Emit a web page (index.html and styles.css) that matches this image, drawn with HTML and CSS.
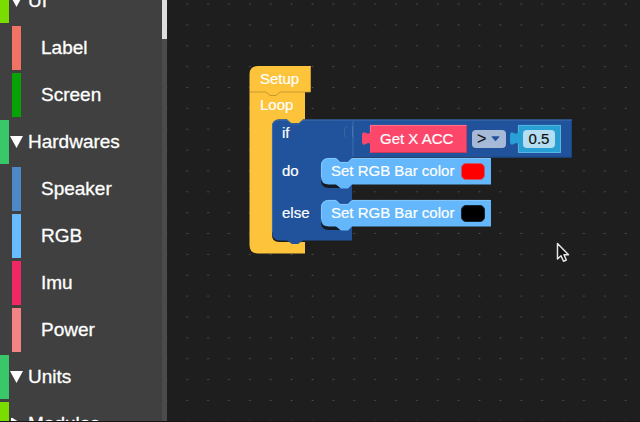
FILE: index.html
```html
<!DOCTYPE html>
<html lang="en">
<head>
<meta charset="utf-8">
<title>Block editor</title>
<link rel="stylesheet" href="styles.css">
</head>
<body>
<div class="editor">
  <nav class="toolbox" aria-label="Blocks">
    <ul class="categories">
      <li class="category lime"><a href="#ui"><svg class="arrow" viewBox="0 0 13 12"><path d="M0 0H13L6.500 12Z"/></svg>UI</a></li>
      <li class="category item label"><a href="#label">Label</a></li>
      <li class="category item screen"><a href="#screen">Screen</a></li>
      <li class="category green"><a href="#hardwares"><svg class="arrow" viewBox="0 0 13 12"><path d="M0 0H13L6.500 12Z"/></svg>Hardwares</a></li>
      <li class="category item speaker"><a href="#speaker">Speaker</a></li>
      <li class="category item rgb"><a href="#rgb">RGB</a></li>
      <li class="category item imu"><a href="#imu">Imu</a></li>
      <li class="category item power"><a href="#power">Power</a></li>
      <li class="category green"><a href="#units"><svg class="arrow" viewBox="0 0 13 12"><path d="M0 0H13L6.500 12Z"/></svg>Units</a></li>
      <li class="category lime"><a href="#modules"><svg class="arrow" viewBox="0 0 13 12"><path d="M1 -1L12 6L1 13Z"/></svg>Modules</a></li>
    </ul>
    <div class="scrollbar"><div class="thumb"></div></div>
  </nav>
  <main class="workspace">
    <svg class="grid" aria-hidden="true">
      <defs>
        <pattern id="dots" x="9.700" y="14.500" width="20.880" height="20.860" patternUnits="userSpaceOnUse">
          <path d="M9.700 10.400h1.600" stroke="#555" stroke-width="1"/>
        </pattern>
      </defs>
      <rect width="100%" height="100%" fill="url(#dots)"/>
    </svg>
    <div class="program">
      <svg class="shapes" viewBox="249 66 324 188" aria-hidden="true">
        <!-- Loop -->
        <path fill="#fdc43b" d="M249.500 92H305V119.500H303L299 123H291L287 119.500H279Q272 119.500 272 127V235Q272 242 279 242H305V253.500H258Q249.500 253.500 249.500 245Z"/>
        <!-- Setup -->
        <path fill="#fdc43b" d="M249.500 92V74Q249.500 66 258 66H311V92H280L276 95.500H270L266 92Z"/>
        <path fill="none" stroke="#b88d2b" stroke-width=".8" d="M250 92H266L270 95.500H276L280 92H310.500V67"/>
        <!-- If / else -->
        <path fill="#20539b" d="M272 127Q272 119.500 279 119.500H287L291 123.500H299L303 119.500H572V157.500H352V240.500H303L298 244H292L287 240.500H280Q272 240.500 272 232Z"/>
        <path fill="none" stroke="#4876b3" stroke-width=".8" d="M272.400 232V127Q272.400 120 279 120H287L291 123.800H299L303 120H571.500M353 156.500V121M352.500 137V126"/>
        <path fill="none" stroke="#41699e" stroke-width=".8" d="M347 126Q344.500 127 344.500 130V135Q345 138 347 138"/>
        <path fill="none" stroke="#194681" d="M571.500 121V157H491"/>
        <!-- Shadows below the statements -->
        <path id="slot" fill="#151b23" d="M321 174V180Q321 188 329 188H345V174Z"/>
        <use href="#slot" y="42"/>
        <!-- Set RGB Bar color -->
        <g id="statement">
          <path fill="#64b7fb" d="M321 166Q321 158 329 158H336L340 162H348L352 158H491V184.500H352L348 188.500H341L336 184.500H329Q321 184.500 321 177Z"/>
          <path fill="none" stroke="#8bcafd" stroke-width=".8" d="M321.400 177V166Q321.400 158.400 329 158.400H336L340 162.400H348L352 158.400H490"/>
        </g>
        <use href="#statement" y="42"/>
        <!-- Get X ACC -->
        <path fill="#fc476b" d="M370 125H467V153H370V144Q369 142 366 144Q362 146 362 142V135Q362 131 366 133Q369 135 370 132Z"/>
        <path fill="none" stroke="#ff8199" stroke-width=".8" d="M370.400 132V125.400H466"/>
        <path fill="none" stroke="#bd3754" stroke-width=".8" d="M466.500 126V152.500H371"/>
        <!-- Number -->
        <path fill="#289fd5" d="M518 125H561V153H518V144Q517 142 514 144Q510 146 510 142V135Q510 131 514 133Q517 135 518 132Z"/>
        <path fill="none" stroke="#63bde3" stroke-width=".8" d="M518.400 132V125.400H560.500V152.500H518.400V144"/>
      </svg>
      <div class="row">Setup</div>
      <div class="row">Loop</div>
      <div class="row nested condition">
        <span class="keyword">if</span>
        <span class="getter">Get X ACC</span>
        <span class="operator">
          <select aria-label="Comparison"><option>&gt;</option><option>&lt;</option><option>=</option></select>
          <svg class="caret" viewBox="0 0 10 6" aria-hidden="true"><path d="M1 0H9Q10 0 9 1L5.500 5Q5 6 4.500 5L1 1Q0 0 1 0Z"/></svg>
        </span>
        <input class="number" type="text" value="0.5" aria-label="Number">
      </div>
      <div class="row nested statement">
        <span class="keyword">do</span>
        <span class="action">Set RGB Bar color</span>
        <button class="swatch red" type="button" aria-label="Red"></button>
      </div>
      <div class="row nested statement">
        <span class="keyword">else</span>
        <span class="action">Set RGB Bar color</span>
        <button class="swatch black" type="button" aria-label="Black"></button>
      </div>
    </div>
    <svg class="pointer" viewBox="0 0 14 22" aria-hidden="true"><path d="M1.500 1.500V17L5 13.800L7.500 19.200L10.300 18L8 12.800H12.500Z" fill="#111" stroke="#e4e4e4" stroke-width="1.500" stroke-linejoin="round"/></svg>
  </main>
</div>
</body>
</html>
```
FILE: styles.css
```css
* {
  box-sizing: border-box;
}

body {
  margin: 0;
  background: #1e1e1e;
  color: #fff;
  font-family: "Liberation Sans", Arial, sans-serif;
}

.editor {
  display: flex;
  height: 100vh;
  overflow: hidden;
  border-bottom: 1px solid #161616;
}

.toolbox {
  display: flex;
  flex: 0 0 167px;
  overflow: hidden;
  background: #404040;
}

.categories {
  flex: 1;
  margin: -21px 0 0;
  padding: 0;
  list-style: none;
}

.category {
  height: 44px;
  margin-bottom: 3px;
  border-left: 9px solid;
}

.category a {
  display: flex;
  align-items: center;
  height: 44px;
  padding-left: 1px;
  color: #fff;
  font-size: 19px;
  text-decoration: none;
  -webkit-text-stroke: 0.3px #fff;
}

.category.item {
  margin-left: 12px;
}

.category.item a {
  padding-left: 20px;
}

.arrow {
  width: 13px;
  height: 12px;
  margin-right: 5px;
  fill: #fff;
}

.lime { border-color: #7bdc00; }
.green { border-color: #38c869; }
.label { border-color: #f17366; }
.screen { border-color: #06a206; }
.speaker { border-color: #4f88c6; }
.rgb { border-color: #67bbff; }
.imu { border-color: #ef2864; }
.power { border-color: #f28485; }

.scrollbar {
  width: 5px;
  background: #4b4b4b;
}

.thumb {
  height: 39px;
  background: #dedede;
}

.workspace {
  position: relative;
  flex: 1;
  overflow: hidden;
}

.grid {
  display: block;
  width: 100%;
  height: 100%;
}

.program {
  position: absolute;
  top: 66px;
  left: 82px;
  font-size: 15px;
  line-height: 26px;
  white-space: nowrap;
  -webkit-text-stroke: 0.2px;
}

.shapes {
  position: absolute;
  top: 0;
  left: 0;
  width: 324px;
  height: 188px;
}

.row {
  position: relative;
  display: flex;
  align-items: center;
  height: 26px;
  padding-left: 11px;
}

.nested {
  padding-left: 33px;
}

.keyword {
  width: 49px;
}

.condition {
  height: 40px;
  padding-top: 2px;
}

.condition .keyword {
  align-self: flex-start;
  width: 98px;
}

.getter {
  width: 92px;
}

.action {
  width: 130px;
}

.statement {
  margin-bottom: 16px;
}

.operator {
  position: relative;
  width: 34px;
  height: 18px;
  margin-right: 17px;
}

.operator select {
  display: block;
  width: 100%;
  height: 18px;
  padding: 0 5px;
  border: 0;
  border-radius: 4px;
  appearance: none;
  background: #a6bad7;
  color: #111;
  font: 16px/18px "Liberation Sans", Arial, sans-serif;
}

.caret {
  position: absolute;
  top: 6px;
  right: 6px;
  width: 9px;
  height: 6px;
  fill: #20539b;
  pointer-events: none;
}

.number {
  width: 32px;
  height: 18px;
  padding: 0;
  border: 0;
  border-radius: 4px;
  background: #b5def1;
  color: #111;
  font: 15px/18px "Liberation Sans", Arial, sans-serif;
  text-align: center;
}

.swatch {
  width: 24px;
  height: 17px;
  padding: 0;
  border: 1px solid #3d6790;
  border-radius: 5px;
}

.red {
  border-color: #c9586b;
  background: #fe0000;
}

.black {
  border-color: #17242f;
  background: #000;
}

.pointer {
  position: absolute;
  top: 242px;
  left: 389px;
  width: 14px;
  height: 22px;
}
```
